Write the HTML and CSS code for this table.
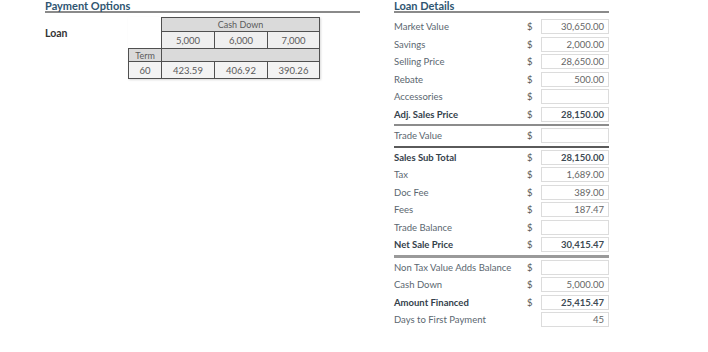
FILE: index.html
```html
<!DOCTYPE html>
<html>
<head>
<meta charset="utf-8">
<link rel="stylesheet" href="styles.css">
</head>
<body>
<div class="page">
  <section class="col-left">
    <h2 class="heading">Payment Options</h2>
    <div class="loan">
      <div class="loan-label">Loan</div>
      <table class="grid">
        <tr class="r-head">
          <td class="blank"></td>
          <td class="g" colspan="3">Cash Down</td>
        </tr>
        <tr class="r-light">
          <td class="blank"></td>
          <td class="c1">5,000</td>
          <td class="c2">6,000</td>
          <td class="c3">7,000</td>
        </tr>
        <tr class="r-head r-term">
          <td class="c0">Term</td>
          <td colspan="3"></td>
        </tr>
        <tr class="r-light r-last">
          <td class="c0">60</td>
          <td>423.59</td>
          <td>406.92</td>
          <td>390.26</td>
        </tr>
      </table>
    </div>
  </section>
  <section class="col-right">
    <h2 class="heading">Loan Details</h2>
    <div class="rows">
      <div class="row"><span class="lbl">Market Value</span><span class="cur">$</span><span class="box">30,650.00</span></div>
      <div class="row"><span class="lbl">Savings</span><span class="cur">$</span><span class="box">2,000.00</span></div>
      <div class="row"><span class="lbl">Selling Price</span><span class="cur">$</span><span class="box">28,650.00</span></div>
      <div class="row"><span class="lbl">Rebate</span><span class="cur">$</span><span class="box">500.00</span></div>
      <div class="row"><span class="lbl">Accessories</span><span class="cur">$</span><span class="box"></span></div>
      <div class="row strong"><span class="lbl">Adj. Sales Price</span><span class="cur">$</span><span class="box">28,150.00</span></div>
      <div class="sep sep-a"></div>
      <div class="row"><span class="lbl">Trade Value</span><span class="cur">$</span><span class="box"></span></div>
      <div class="sep sep-b"></div>
      <div class="row strong"><span class="lbl">Sales Sub Total</span><span class="cur">$</span><span class="box">28,150.00</span></div>
      <div class="row"><span class="lbl">Tax</span><span class="cur">$</span><span class="box">1,689.00</span></div>
      <div class="row"><span class="lbl">Doc Fee</span><span class="cur">$</span><span class="box">389.00</span></div>
      <div class="row"><span class="lbl">Fees</span><span class="cur">$</span><span class="box">187.47</span></div>
      <div class="row"><span class="lbl">Trade Balance</span><span class="cur">$</span><span class="box"></span></div>
      <div class="row strong"><span class="lbl">Net Sale Price</span><span class="cur">$</span><span class="box">30,415.47</span></div>
      <div class="sep sep-c"></div>
      <div class="row"><span class="lbl">Non Tax Value Adds Balance</span><span class="cur">$</span><span class="box"></span></div>
      <div class="row"><span class="lbl">Cash Down</span><span class="cur">$</span><span class="box">5,000.00</span></div>
      <div class="row strong"><span class="lbl">Amount Financed</span><span class="cur">$</span><span class="box">25,415.47</span></div>
      <div class="row"><span class="lbl">Days to First Payment</span><span class="cur"></span><span class="box">45</span></div>
    </div>
  </section>
</div>
</body>
</html>
```
FILE: styles.css
```css
html, body {
  margin: 0;
  padding: 0;
  background: #ffffff;
}
body {
  font-family: Lato, "Open Sans", "Liberation Sans", sans-serif;
  color: #5b6770;
}
.page {
  display: flex;
  gap: 34px;
  padding-left: 45px;
}
.col-left {
  width: 315px;
}
.col-right {
  width: 215px;
}
.heading {
  margin: 0;
  font-size: 11px;
  font-weight: 700;
  line-height: 11px;
  color: #2f5571;
  padding-bottom: 0;
  border-bottom: 2px solid #8a8a8a;
}
.loan {
  display: flex;
  margin-top: 4px;
}
.loan-label {
  width: 83px;
  padding-top: 10px;
  font-size: 10.5px;
  font-weight: 700;
  color: #333;
}
.grid {
  border-collapse: collapse;
  font-size: 9px;
  color: #5a5a5a;
  text-align: center;
  box-shadow: 1px 1px 2px rgba(0,0,0,0.15);
}
.grid td {
  border: 1px solid #505050;
  padding: 0;
}
.grid td.blank {
  border: none;
  background: transparent;
}
.grid .c0 { width: 32px; }
.grid .c1 { width: 52px; }
.grid .c2 { width: 52px; }
.grid .c3 { width: 51px; }
.r-head td { background: #dadada; height: 13px; line-height: 12px; }
.r-term td { height: 12px; line-height: 11px; }
.r-light td { background: #efefef; height: 16px; font-size: 9.5px; }
.r-last td { background: #f3f3f3; }

.rows {
  margin-top: 5px;
}
.row {
  display: flex;
  align-items: center;
  height: 17.5px;
  font-size: 9.5px;
}
.row .lbl {
  width: 133px;
}
.row .cur {
  width: 11px;
  color: #555;
}
.row .box {
  box-sizing: border-box;
  width: 68px;
  height: 15px;
  margin-left: 3px;
  border: 1px solid #dcdcdc;
  text-align: right;
  padding-right: 4px;
  line-height: 13px;
  color: #666;
}
.row.strong .lbl {
  font-weight: 700;
  color: #34414b;
}
.row.strong .box {
  font-weight: 700;
  color: #3d4a54;
}
.sep {
  height: 2px;
  margin: 1px 0;
}
.sep-a { background: #8c8c8c; }
.sep-b { background: #5a5a5a; }
.sep-c { background: #9a9a9a; height: 3px; margin: 1px 0 1px; }
```
